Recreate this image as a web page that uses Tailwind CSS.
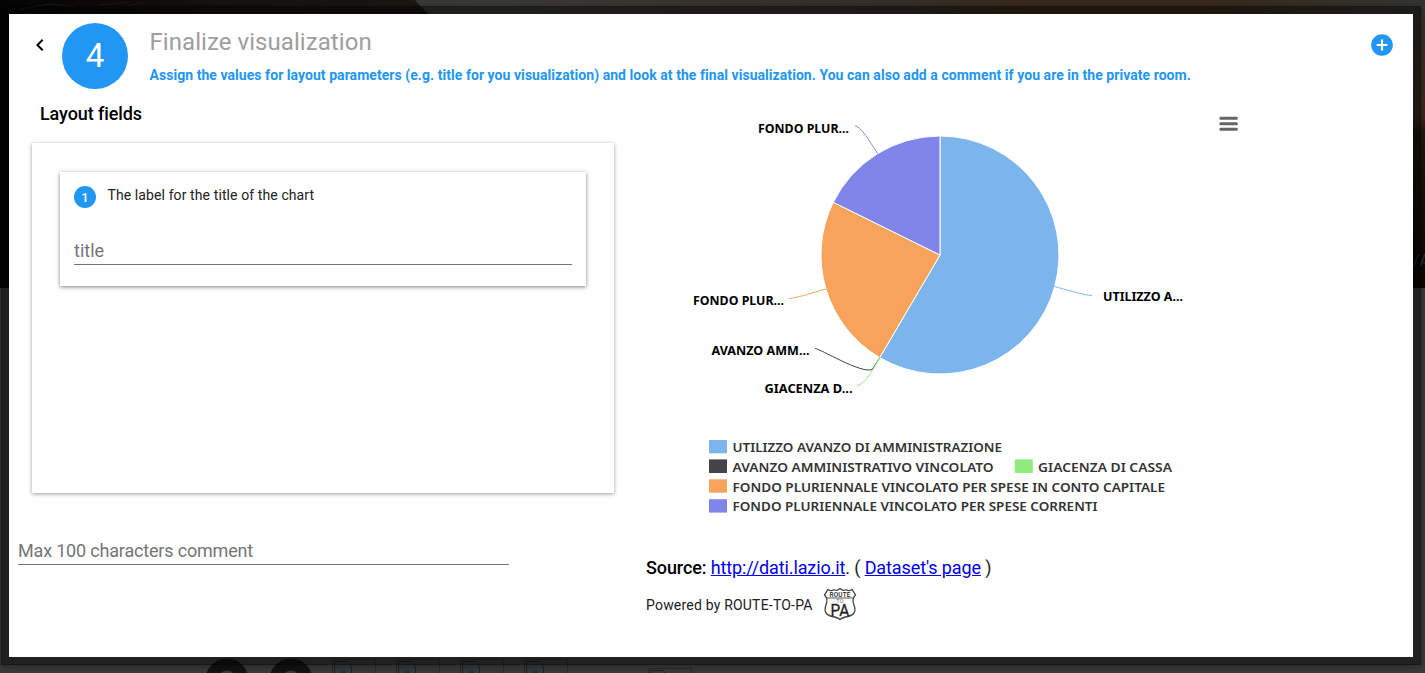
<!DOCTYPE html>
<html lang="en">
<head>
<meta charset="utf-8">
<title>Finalize visualization</title>
<script src="https://cdn.jsdelivr.net/npm/@tailwindcss/browser@4"></script>
</head>
<body class="relative h-[673px] w-[1425px] overflow-hidden bg-[#3b3b3b] font-[Roboto,sans-serif] text-black">
<!-- dimmed page behind the dialog -->
<div class="h-[288px] bg-[#080706]">
  <svg class="block h-[288px] w-full" viewBox="0 0 1425 288">
    <defs>
      <linearGradient id="sky" x1="0" x2="1"><stop offset="0" stop-color="#30302e"/><stop offset=".35" stop-color="#3a3a37"/><stop offset=".52" stop-color="#38322c"/><stop offset=".62" stop-color="#342f2b"/><stop offset=".72" stop-color="#38291b"/><stop offset=".85" stop-color="#37291c"/><stop offset="1" stop-color="#343431"/></linearGradient>
      <linearGradient id="hill" x1="0" x2="1"><stop offset="0" stop-color="#040403"/><stop offset=".5" stop-color="#15120f"/><stop offset="1" stop-color="#1b1612"/></linearGradient>
      <linearGradient id="edge" x1="0" x2="0" y1="0" y2="1"><stop offset="0" stop-color="#343431"/><stop offset=".4" stop-color="#3a2c1c"/><stop offset=".46" stop-color="#1e1811"/><stop offset="1" stop-color="#080604"/></linearGradient>
    </defs>
    <rect width="1425" height="288" fill="url(#sky)"/>
    <path d="M0 0H415L420 6L427 12L432 18V288H0Z" fill="url(#hill)"/>
    <path d="M20 9l30-5 25 3M100 5l28-3M128 6l18-4" stroke="#1c1916" fill="none"/>
    <rect x="1404" width="21" height="288" fill="url(#edge)"/>
    <text x="1413" y="266" font-size="16" fill="#2c3034">/A</text>
  </svg>
</div>
<svg class="absolute left-0 top-[657px] block" width="1425" height="16" viewBox="0 657 1425 16">
  <g fill="none" stroke="#121415" stroke-width="12"><circle cx="227" cy="680" r="15.500"/><circle cx="291" cy="680" r="15.500"/></g>
  <g fill="none" stroke="#2c2c2c"><path d="M332.500 673V659.500H375.500V673M396.500 673V659.500H439.500V673M460.500 673V659.500H503.500V673M524.500 673V659.500H567.500V673M648.500 673V668.500H691.500V673"/></g>
  <g fill="#343b43" stroke="#222">
    <path d="M334.500 674V661.500H347L351.500 666V674Z"/><path d="M398.500 674V661.500H411L415.500 666V674Z"/><path d="M462.500 674V661.500H475L479.500 666V674Z"/><path d="M526.500 674V661.500H539L543.500 666V674Z"/><path d="M650.500 674V670.500H663L666.500 674Z"/>
  </g>
  <g fill="#193c18"><ellipse cx="343" cy="674" rx="4" ry="3"/><ellipse cx="407" cy="674" rx="4" ry="3"/><ellipse cx="471" cy="674" rx="4" ry="3"/><ellipse cx="535" cy="674" rx="4" ry="3"/></g>
</svg>

<!-- dialog -->
<div class="absolute left-px top-[6px] h-[659px] w-[1420px] border-8 border-black/45 bg-white bg-clip-padding shadow-[0_2px_8px_rgba(0,0,0,.35)]">
  <header class="flex h-[82px] pl-[19px] pt-[9px]">
    <svg class="mt-[10px] block h-6 w-6" viewBox="0 0 24 24"><path d="M15.410 7.410 14 6l-6 6 6 6 1.410-1.410L10.830 12z"/></svg>
    <div class="ml-[10px] flex h-[66px] w-[66px] items-center justify-center rounded-full bg-[#2196f3] text-[33px] text-white">4</div>
    <div class="ml-[21.500px] grow">
      <h1 class="mt-[3px] text-2xl leading-8 tracking-[.06px] text-[#9e9e9e]">Finalize visualization</h1>
      <p class="mt-[7px] whitespace-nowrap text-sm font-bold leading-5 tracking-[.051px] text-[#2196f3]">Assign the values for layout parameters (e.g. title for you visualization) and look at the final visualization. You can also add a comment if you are in the private room.</p>
    </div>
    <svg class="mr-[18px] mt-[9px] block h-[26px] w-[26px]" viewBox="0 0 24 24"><path fill="#2196f3" d="M12 2C6.480 2 2 6.480 2 12s4.480 10 10 10 10-4.480 10-10S17.520 2 12 2zm5 11h-4v4h-2v-4H7v-2h4V7h2v4h4v2z"/></svg>
  </header>

  <main class="flex">
    <section class="w-[637px] shrink-0">
      <h2 class="ml-[31px] mt-[6px] text-lg font-medium leading-6 tracking-[-.1px]">Layout fields</h2>
      <div class="ml-[23px] mt-[17px] h-[350px] w-[582px] bg-white p-7 pt-[29px] shadow-[0_1px_4px_0_rgba(0,0,0,.4)]">
        <div class="h-[114px] bg-white px-[14px] pt-[14px] shadow-[0_1px_4px_0_rgba(0,0,0,.5)]">
          <div class="flex">
            <div class="flex h-[22px] w-[22px] items-center justify-center rounded-full bg-[#2196f3] pt-[2px] text-[13px] font-medium text-white">1</div>
            <div class="ml-[11.500px] text-sm leading-[19px] tracking-[.1px] text-[#212121]">The label for the title of the chart</div>
          </div>
          <div class="mt-[31px] h-[26px] border-b border-[#757575] text-lg leading-6 text-[#757575]">title</div>
        </div>
      </div>
      <div class="ml-[9px] mt-[46px] h-[26px] w-[491px] border-b border-[#757575] text-lg leading-6 tracking-[-.18px] text-[#757575]">Max 100 characters comment</div>
    </section>

    <section>
      <svg class="block" width="600" height="432" viewBox="646 96 600 432">
        <g stroke="#fff" stroke-width="1" stroke-linejoin="round">
          <path fill="#7cb5ec" d="M940 255V136A119 119 0 1 1 879.700 357.600Z"/>
          <path fill="#f7a35c" d="M940 255L879.700 357.600A119 119 0 0 1 833.300 202.300Z"/>
          <path fill="#8085e9" d="M940 255L833.300 202.300A119 119 0 0 1 940 136Z"/>
        </g>
        <g fill="none" stroke-width="1">
          <path stroke="#7cb5ec" d="M1092 295.500C1087 295.500 1076 292.500 1054.500 286.500"/>
          <path stroke="#434348" d="M815 348.500C820 348.500 861 374 872 369.500L880 357.500"/>
          <path stroke="#90ed7d" d="M857 385.500C862 385.500 869 376 871 372.500L880 357.500"/>
          <path stroke="#f7a35c" d="M789 298.500C794 298.500 805 295 826 289"/>
          <path stroke="#8085e9" d="M855 126C860 126 867 137 877.500 153.500"/>
        </g>
        <g font-family="'Noto Sans', 'Open Sans', sans-serif" font-weight="700" font-size="11.600">
          <text x="758" y="133" textLength="91" lengthAdjust="spacingAndGlyphs">FONDO PLUR...</text>
          <text x="693" y="305" textLength="91" lengthAdjust="spacingAndGlyphs">FONDO PLUR...</text>
          <text x="711.500" y="355" textLength="98" lengthAdjust="spacingAndGlyphs">AVANZO AMM...</text>
          <text x="764.500" y="393" textLength="88" lengthAdjust="spacingAndGlyphs">GIACENZA D...</text>
          <text x="1103" y="301" textLength="80" lengthAdjust="spacingAndGlyphs">UTILIZZO A...</text>
        </g>
        <g stroke="#666" stroke-width="3" stroke-linecap="round"><path d="M1220.800 118.200h15.600M1220.800 123.700h15.600M1220.800 129.200h15.600"/></g>
        <rect x="709" y="440" width="18" height="13.300" fill="#7cb5ec"/>
        <rect x="709" y="459.400" width="18" height="13.600" fill="#434348"/>
        <rect x="1014.800" y="459.400" width="18" height="13.600" fill="#90ed7d"/>
        <rect x="709" y="479.300" width="18" height="13.400" fill="#f7a35c"/>
        <rect x="709" y="499.200" width="18" height="13.400" fill="#8085e9"/>
        <g font-family="'Noto Sans', 'Open Sans', sans-serif" font-weight="600" font-size="12.200" fill="#333">
          <text x="732.500" y="451.500" textLength="269.500" lengthAdjust="spacingAndGlyphs">UTILIZZO AVANZO DI AMMINISTRAZIONE</text>
          <text x="732.500" y="471.500" textLength="261" lengthAdjust="spacingAndGlyphs">AVANZO AMMINISTRATIVO VINCOLATO</text>
          <text x="1038" y="471.500" textLength="134" lengthAdjust="spacingAndGlyphs">GIACENZA DI CASSA</text>
          <text x="732.500" y="491.500" textLength="432.500" lengthAdjust="spacingAndGlyphs">FONDO PLURIENNALE VINCOLATO PER SPESE IN CONTO CAPITALE</text>
          <text x="732.500" y="510.800" textLength="365" lengthAdjust="spacingAndGlyphs">FONDO PLURIENNALE VINCOLATO PER SPESE CORRENTI</text>
        </g>
      </svg>
      <div class="mt-7 whitespace-nowrap text-lg leading-6 tracking-[-.11px] text-[#212121]"><span class="font-medium text-black">Source:</span> <span class="text-[#0000ee] underline">http://dati.lazio.it</span>. ( <span class="text-[#0000ee] underline">Dataset's page</span> )</div>
      <div class="mt-[7px] flex h-[34px] items-center text-sm tracking-[.2px] text-[#212121]">
        <span class="pt-px">Powered by ROUTE-TO-PA</span>
        <svg class="ml-[10px] block" width="34" height="34" viewBox="0 0 34 34">
          <path d="M5 2.500Q8 4.500 11 2.700Q14 4.500 17 1.500Q20 4.500 23 2.700Q26 4.500 29 2.500L32.500 8Q28.500 12 31 18Q34.500 27 25 29.500Q19 30.500 17 32.500Q15 30.500 9 29.500Q-.5 27 3 18Q5.500 12 1.500 8Z" fill="#fff" stroke="#444" stroke-width="1.300"/>
          <path d="M4 11H30" stroke="#555"/>
          <g font-family="Roboto, sans-serif" text-anchor="middle" fill="#222">
            <text x="17" y="10" font-size="8" font-weight="500" textLength="21" lengthAdjust="spacingAndGlyphs">ROUTE</text>
            <text x="17" y="16" font-size="5.500" fill="#666">TO</text>
            <text x="17" y="28.500" font-size="16" textLength="19" lengthAdjust="spacingAndGlyphs" stroke="#222" stroke-width=".3">PA</text>
          </g>
        </svg>
      </div>
    </section>
  </main>
</div>
</body>
</html>
